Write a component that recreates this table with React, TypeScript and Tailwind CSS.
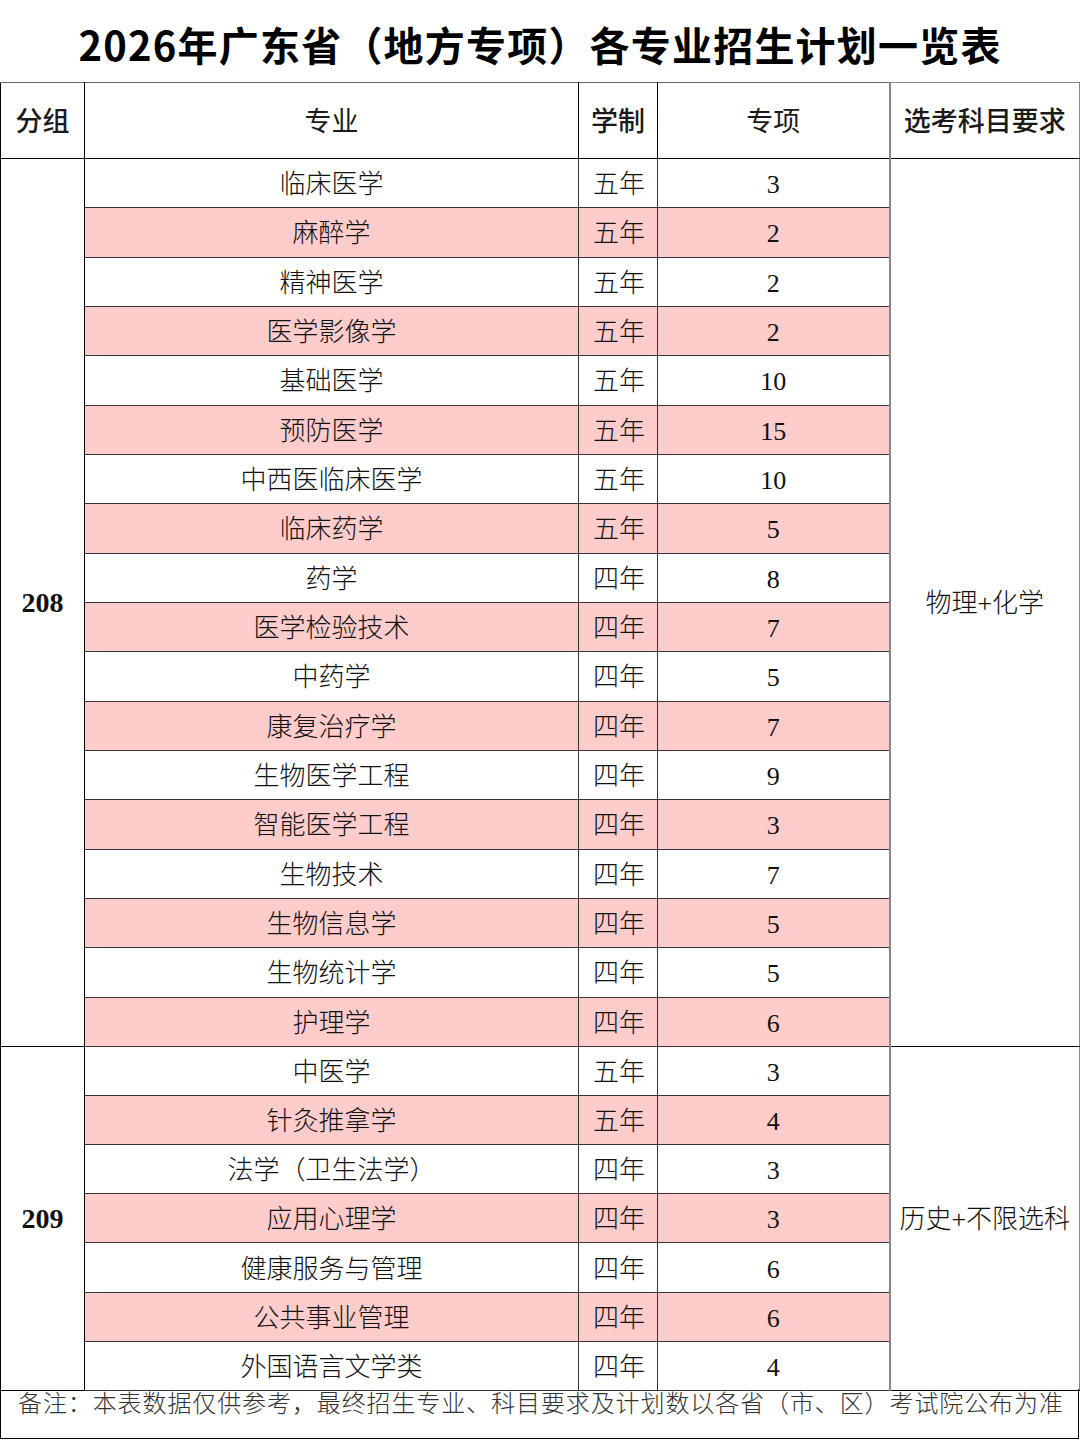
type Row = { name: string; years: string; count: number };

const group208: Row[] = [
  { name: "临床医学", years: "五年", count: 3 },
  { name: "麻醉学", years: "五年", count: 2 },
  { name: "精神医学", years: "五年", count: 2 },
  { name: "医学影像学", years: "五年", count: 2 },
  { name: "基础医学", years: "五年", count: 10 },
  { name: "预防医学", years: "五年", count: 15 },
  { name: "中西医临床医学", years: "五年", count: 10 },
  { name: "临床药学", years: "五年", count: 5 },
  { name: "药学", years: "四年", count: 8 },
  { name: "医学检验技术", years: "四年", count: 7 },
  { name: "中药学", years: "四年", count: 5 },
  { name: "康复治疗学", years: "四年", count: 7 },
  { name: "生物医学工程", years: "四年", count: 9 },
  { name: "智能医学工程", years: "四年", count: 3 },
  { name: "生物技术", years: "四年", count: 7 },
  { name: "生物信息学", years: "四年", count: 5 },
  { name: "生物统计学", years: "四年", count: 5 },
  { name: "护理学", years: "四年", count: 6 },
];

const group209: Row[] = [
  { name: "中医学", years: "五年", count: 3 },
  { name: "针灸推拿学", years: "五年", count: 4 },
  { name: "法学（卫生法学）", years: "四年", count: 3 },
  { name: "应用心理学", years: "四年", count: 3 },
  { name: "健康服务与管理", years: "四年", count: 6 },
  { name: "公共事业管理", years: "四年", count: 6 },
  { name: "外国语言文学类", years: "四年", count: 4 },
];

const body = "font-['Liberation_Serif','Noto_Sans_CJK_SC',serif] font-light text-[26px] text-[#111] pt-[3px]";

function Group({ code, rows, subject, rowH }: { code: string; rows: Row[]; subject: string; rowH: string }) {
  return (
    <>
      {rows.map((r, i) => {
        const bg = i % 2 === 1 ? "bg-[#ffcccc]" : "bg-white";
        return (
          <tr key={r.name} className={rowH}>
            {i === 0 && (
              <td
                rowSpan={rows.length}
                className="border-[1.5px] border-black bg-white text-center font-['Liberation_Serif',serif] text-[28px] font-bold text-[#111] pt-[2px]"
              >
                {code}
              </td>
            )}
            <td className={`border border-[#333] text-center ${bg} ${body}`}>{r.name}</td>
            <td className={`border border-[#333] pl-[14px] ${bg} ${body}`}>{r.years}</td>
            <td className={`border border-[#333] border-r-2 border-r-[#888] text-center ${bg} ${body}`}>{r.count}</td>
            {i === 0 && (
              <td
                rowSpan={rows.length}
                className={`border-[1.5px] border-black border-l-2 border-l-[#888] border-r-[#888] bg-white text-center ${body}`}
              >
                {subject}
              </td>
            )}
          </tr>
        );
      })}
    </>
  );
}

export default function App() {
  return (
    <div className="w-[1080px] h-[1442px] bg-white">
      <div className="h-[82px] flex items-center justify-center pt-[6px]">
        <h1 className="font-['Noto_Sans_CJK_SC',sans-serif] text-[40px] font-bold text-black tracking-[1.2px]">
          2026年广东省（地方专项）各专业招生计划一览表
        </h1>
      </div>
      <table className="w-[1079px] table-fixed border-collapse">
        <colgroup>
          <col className="w-[84px]" />
          <col className="w-[494px]" />
          <col className="w-[79px]" />
          <col className="w-[232px]" />
          <col className="w-[190px]" />
        </colgroup>
        <thead>
          <tr className="h-[76px] font-['Noto_Sans_CJK_SC',sans-serif] text-[27px] text-[#1a1a1a]">
            <th className="border-[1.5px] border-black border-t-[#666] text-center font-medium">分组</th>
            <th className="border-[1.5px] border-black border-t-[#666] text-center font-normal">专业</th>
            <th className="border-[1.5px] border-black border-t-[#666] text-center font-medium">学制</th>
            <th className="border-[1.5px] border-black border-t-[#666] border-r-2 border-r-[#888] text-center font-normal">专项</th>
            <th className="border-[1.5px] border-[#888] border-b-black text-center font-medium whitespace-nowrap">选考科目要求</th>
          </tr>
        </thead>
        <tbody>
          <Group code="208" rows={group208} subject="物理+化学" rowH="h-[49.33px]" />
          <Group code="209" rows={group209} subject="历史+不限选科" rowH="h-[49.15px]" />
        </tbody>
      </table>
      <div className="w-[1079px] h-[50px] border-[1.5px] border-t-0 border-black">
        <p className="-mt-[2px] pl-[17px] font-['Noto_Sans_CJK_SC',sans-serif] font-light text-[24px] leading-[26px] text-[#333] tracking-[0.9px] whitespace-nowrap">
          备注：本表数据仅供参考，最终招生专业、科目要求及计划数以各省（市、区）考试院公布为准
        </p>
      </div>
    </div>
  );
}
